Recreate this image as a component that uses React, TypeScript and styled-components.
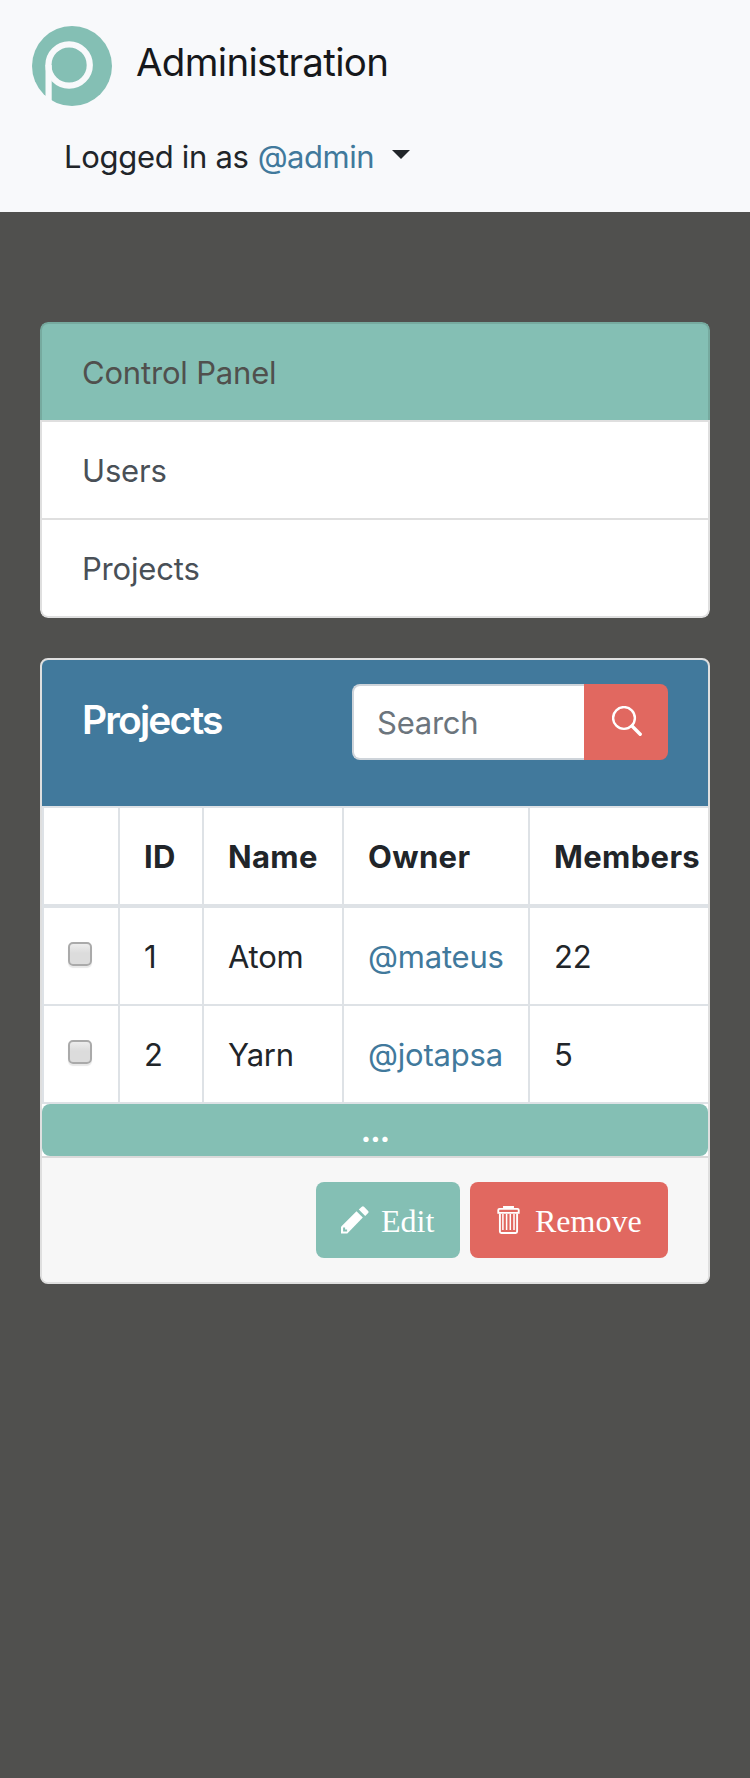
import React from 'react';
import styled, { createGlobalStyle, css } from 'styled-components';

const teal = '#84bfb4';
const blue = '#41799c';
const red = '#e16860';
const rule = '#dee2e6';

const GlobalStyle = createGlobalStyle`
  *, *::before, *::after { box-sizing: border-box; }
  body {
    margin: 0;
    min-height: 1778px;
    background: #50504e;
    color: #212529;
    font: 400 31px/48px Inter, "Liberation Sans", sans-serif;
    -webkit-font-smoothing: antialiased;
  }
`;

const Navbar = styled.header`
  height: 212px;
  padding: 26px 32px 0;
  background: #f8f9fb;
`;

const Brand = styled.div`
  display: flex;
  gap: 24px;
  height: 80px;
  color: #16181b;
`;

const BrandName = styled.span`
  padding-top: 6px;
  font-size: 38.5px;
  line-height: 60px;
  letter-spacing: -0.7px;
  white-space: nowrap;
`;

const UserMenu = styled.div`
  display: flex;
  align-items: center;
  height: 48px;
  margin: 27px 0 0 32px;
  white-space: nowrap;
`;

const UserText = styled.span`
  letter-spacing: -0.3px;
`;

const UserLink = styled.a`
  color: ${blue};
  text-decoration: none;
`;

const MenuLink = styled(UserLink)`
  margin-left: 9px;
  letter-spacing: -0.5px;
`;

const Caret = styled.span`
  margin: -5px 0 0 18px;
  border: 9px solid transparent;
  border-top-color: #212529;
  border-bottom: 0;
`;

const Page = styled.main`
  display: flex;
  flex-direction: column;
  gap: 40px;
  padding: 110px 40px 0;
`;

const Menu = styled.nav`
  display: flex;
  flex-direction: column;
  border-radius: 8px;
  overflow: hidden;
`;

const MenuItem = styled.a<{ $active?: boolean }>`
  height: 98px;
  padding: 25px 40px 0;
  border: 2px solid #dfdfdf;
  border-bottom: 0;
  background: #fff;
  color: #495057;
  letter-spacing: -0.18px;
  ${p => p.$active && css`
    border-color: #76aa9f;
    border-radius: 8px 8px 0 0;
    background: ${teal};
    color: #50504d;
  `}
  &:last-child {
    height: 100px;
    border-bottom: 2px solid #dfdfdf;
    border-radius: 0 0 8px 8px;
  }
`;

const Card = styled.section`
  height: 626px;
  border: 2px solid #dfdfdf;
  border-radius: 8px;
  background: #fff;
  overflow: hidden;
`;

const CardHeader = styled.div`
  display: flex;
  justify-content: space-between;
  height: 146px;
  padding: 24px 40px 0;
  background: ${blue};
`;

const CardTitle = styled.h5`
  margin: 12px 0 0;
  color: #fff;
  font-size: 39px;
  font-weight: 600;
  line-height: 48px;
  letter-spacing: -1.85px;
`;

const SearchGroup = styled.div`
  display: flex;
  width: 316px;
  height: 76px;
`;

const SearchInput = styled.input`
  width: 232px;
  padding: 1px 23px 0;
  border: 2px solid #ced4da;
  border-right: 0;
  border-radius: 8px 0 0 8px;
  background: #fff;
  font: inherit;
  letter-spacing: -0.25px;
  outline: 0;
  &::placeholder { color: #6c757d; opacity: 1; }
`;

const SearchButton = styled.button`
  display: flex;
  align-items: center;
  width: 84px;
  padding: 0 0 2px 28px;
  border: 0;
  border-radius: 0 8px 8px 0;
  background: ${red};
`;

const TableScroll = styled.div`
  height: 298px;
  overflow: hidden;
`;

const Table = styled.div`
  width: 800px;
  border-left: 2px solid ${rule};
`;

const Row = styled.div<{ $head?: boolean }>`
  display: grid;
  grid-template-columns: 76px 84px 140px 186px 1fr;
  height: ${p => (p.$head ? 102 : 98)}px;
  border-bottom: ${p => (p.$head ? 4 : 2)}px solid ${rule};
  letter-spacing: -0.2px;
  ${p => p.$head && css`
    border-top: 2px solid ${rule};
    font-weight: 700;
    letter-spacing: 0.35px;
  `}
`;

const Cell = styled.div`
  padding: 25px 24px 0;
  border-right: 2px solid ${rule};
  white-space: nowrap;
`;

const Check = styled.input`
  display: block;
  appearance: none;
  width: 24px;
  height: 24px;
  margin: 9px 0 0;
  border: 2px solid #aaa;
  border-radius: 5px;
  background: linear-gradient(#ededed, #dcdcdc 45%);
  box-shadow: 0 2px 1px #e8e8e8;
`;

const MoreButton = styled.button`
  display: block;
  width: 100%;
  height: 52px;
  padding: 2px 0 0;
  border: 0;
  border-radius: 8px;
  background: ${teal};
  color: #fff;
  font: inherit;
  font-weight: 700;
  line-height: 48px;
  letter-spacing: -0.8px;
`;

const CardFooter = styled.div`
  display: flex;
  justify-content: flex-end;
  gap: 10px;
  height: 126px;
  padding: 24px 40px 0;
  border-top: 2px solid #dadada;
  background: #f7f7f7;
`;

const Action = styled.button<{ $tone: string; $width: number; $inset: number }>`
  display: flex;
  align-items: center;
  width: ${p => p.$width}px;
  height: 76px;
  padding: 0 0 0 ${p => p.$inset}px;
  border: 0;
  border-radius: 8px;
  background: ${p => p.$tone};
  color: #fff;
  font: 32px/48px "Liberation Serif", serif;
`;

const ActionLabel = styled.span<{ $gap: number }>`
  margin-left: ${p => p.$gap}px;
  padding-top: 1px;
`;

const Logo = () => (
  <svg width="80" height="80" viewBox="0 0 80 80">
    <circle cx="40" cy="40" r="40" fill={teal} />
    <g fill="none" stroke="#f8f9fb" strokeWidth="6.2">
      <circle cx="37.1" cy="39" r="20.7" />
      <path d="M16.6 39V80" />
    </g>
  </svg>
);

const SearchIcon = () => (
  <svg width="30" height="30" viewBox="0 0 30 30" fill="none" stroke="#fff">
    <circle cx="12" cy="12" r="10.9" strokeWidth="2.4" />
    <path d="M20 20l8.2 8.2" strokeWidth="3.4" strokeLinecap="round" />
  </svg>
);

const PencilIcon = () => (
  <svg width="29" height="28" viewBox="0 0 29 28" fill="#fff">
    <path d="M1 20.7 16.5 5.3l6.3 6.3L7.3 27.5H1z" />
    <path d="M18.8 3.6 21.8.8a1.6 1.6 0 0 1 2.2 0l4.1 4.1a1.6 1.6 0 0 1 0 2.2l-2.9 2.9z" />
    <path d="M3.1 21.5v3.9h4v-2h-2v-1.9z" fill={teal} />
  </svg>
);

const TrashIcon = () => (
  <svg width="24" height="28" viewBox="0 0 24 28" fill="none" stroke="#fff" strokeWidth="1.9">
    <path d="M7 2.5V1h9v1.5M2.5 2.9h18q1.2 0 1.2 1.2v2.8H1.3V4.1q0-1.2 1.2-1.2z" />
    <path d="M2.9 7.5v18.1q0 1.4 1.4 1.4h14.4q1.4 0 1.4-1.4V7.5" />
    <path d="M5.9 8v16M9.6 8v16M13.3 8v16M17 8v16" strokeWidth="1.5" />
  </svg>
);

const projects = [
  { id: 1, name: 'Atom', owner: '@mateus', members: 22 },
  { id: 2, name: 'Yarn', owner: '@jotapsa', members: 5 },
];

export default function App() {
  return (
    <>
      <GlobalStyle />
      <Navbar>
        <Brand>
          <Logo />
          <BrandName>Administration</BrandName>
        </Brand>
        <UserMenu>
          <UserText>Logged in as</UserText>
          <MenuLink>@admin</MenuLink>
          <Caret />
        </UserMenu>
      </Navbar>
      <Page>
        <Menu>
          <MenuItem $active>Control Panel</MenuItem>
          <MenuItem>Users</MenuItem>
          <MenuItem>Projects</MenuItem>
        </Menu>
        <Card>
          <CardHeader>
            <CardTitle>Projects</CardTitle>
            <SearchGroup>
              <SearchInput placeholder="Search" />
              <SearchButton aria-label="Search">
                <SearchIcon />
              </SearchButton>
            </SearchGroup>
          </CardHeader>
          <TableScroll>
            <Table>
              <Row $head>
                <Cell />
                <Cell>ID</Cell>
                <Cell>Name</Cell>
                <Cell>Owner</Cell>
                <Cell>Members</Cell>
              </Row>
              {projects.map(p => (
                <Row key={p.id}>
                  <Cell><Check type="checkbox" /></Cell>
                  <Cell>{p.id}</Cell>
                  <Cell>{p.name}</Cell>
                  <Cell><UserLink>{p.owner}</UserLink></Cell>
                  <Cell>{p.members}</Cell>
                </Row>
              ))}
            </Table>
          </TableScroll>
          <MoreButton>...</MoreButton>
          <CardFooter>
            <Action $tone={teal} $width={144} $inset={24}>
              <PencilIcon />
              <ActionLabel $gap={12}>Edit</ActionLabel>
            </Action>
            <Action $tone={red} $width={198} $inset={27}>
              <TrashIcon />
              <ActionLabel $gap={14}>Remove</ActionLabel>
            </Action>
          </CardFooter>
        </Card>
      </Page>
    </>
  );
}
